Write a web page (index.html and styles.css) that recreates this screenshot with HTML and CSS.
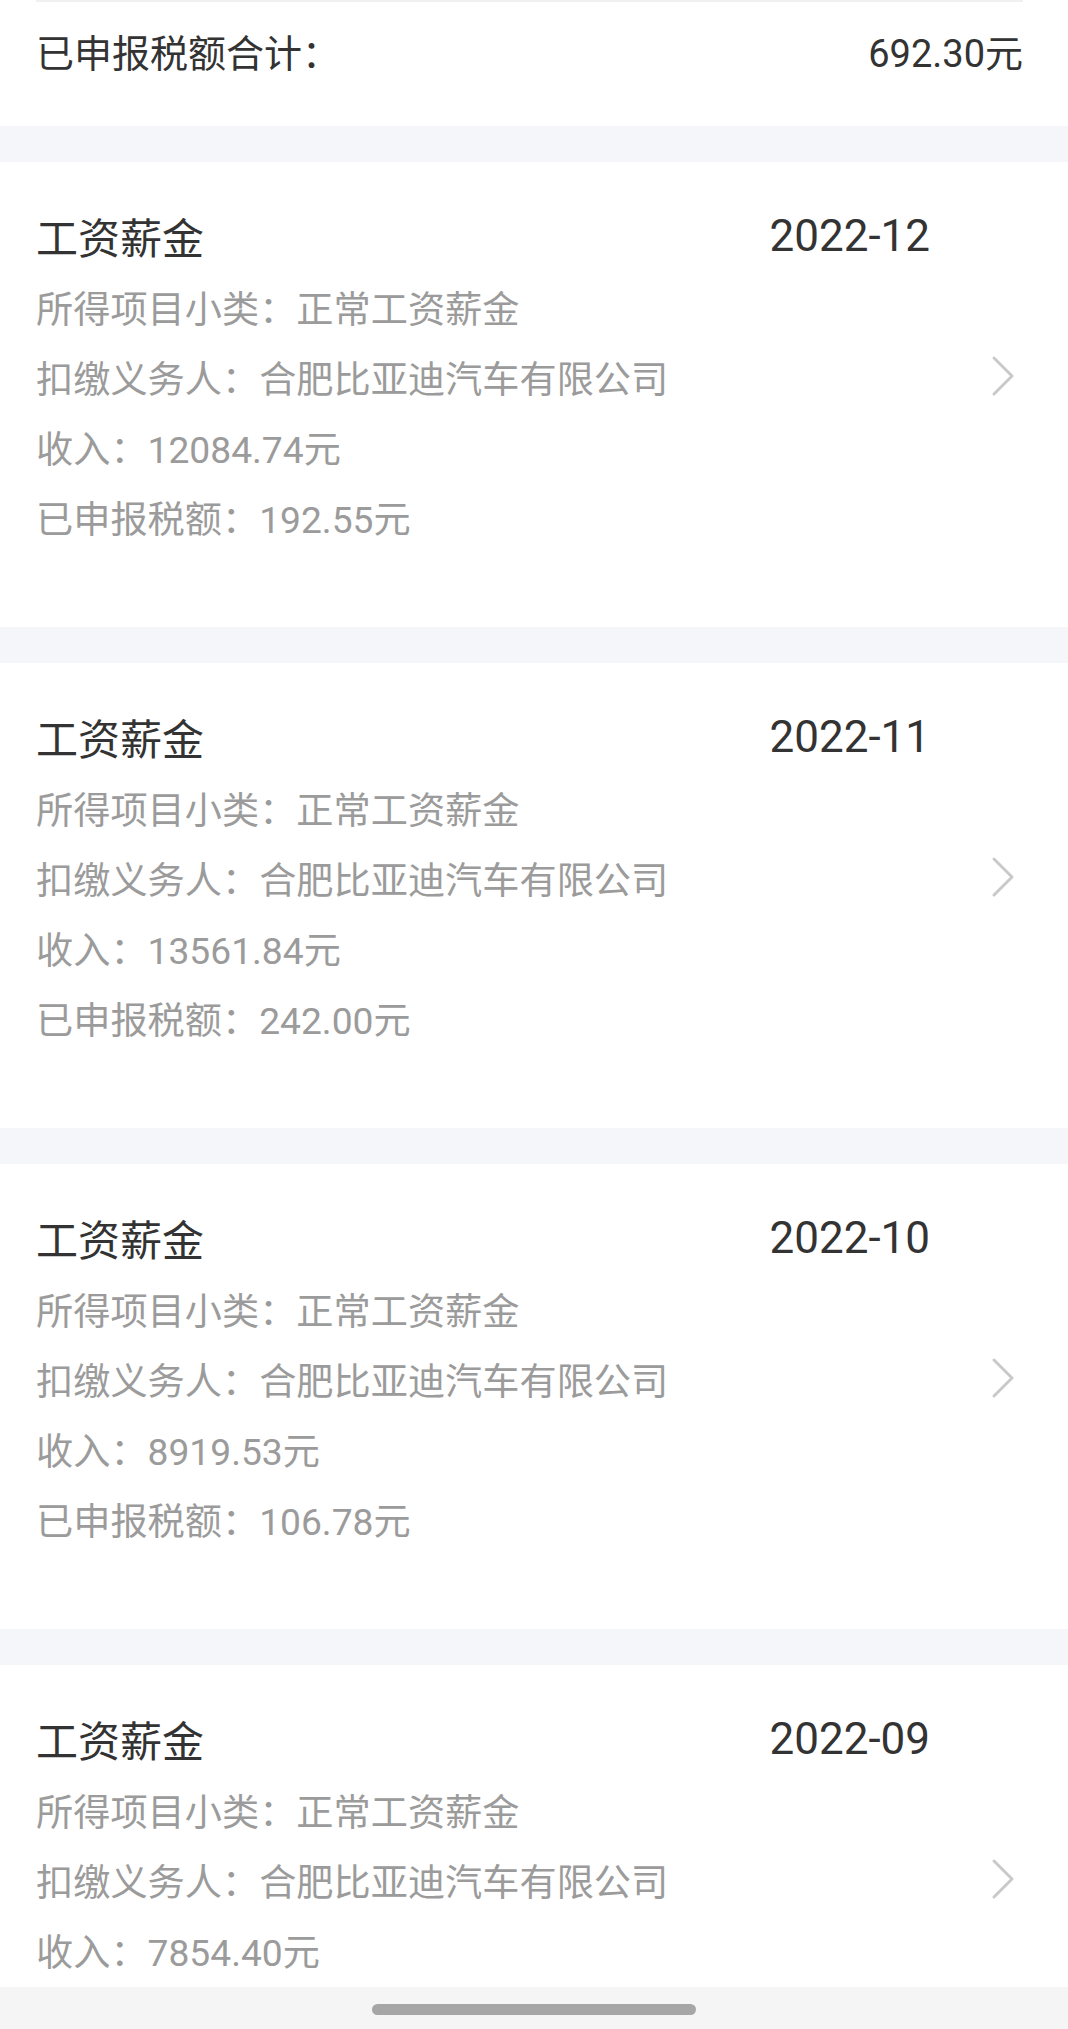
FILE: index.html
```html
<!DOCTYPE html>
<html lang="zh-CN">
<head>
<meta charset="utf-8">
<title>收入纳税明细</title>
<link rel="stylesheet" href="styles.css">
</head>
<body>
<div class="page">
  <section class="summary">
    <div class="summary-row">
      <span class="summary-label">已申报税额合计：</span>
      <span class="summary-value">692.30元</span>
    </div>
  </section>

  <section class="card">
    <div class="card-body">
      <div class="card-head"><span class="card-title">工资薪金</span><span class="card-date">2022-12</span></div>
      <div class="card-line">所得项目小类：正常工资薪金</div>
      <div class="card-line">扣缴义务人：合肥比亚迪汽车有限公司</div>
      <div class="card-line">收入：12084.74元</div>
      <div class="card-line">已申报税额：192.55元</div>
    </div>
    <svg class="chevron" viewBox="0 0 26 42"><path d="M4 3 L22 21 L4 39"/></svg>
  </section>

  <section class="card">
    <div class="card-body">
      <div class="card-head"><span class="card-title">工资薪金</span><span class="card-date">2022-11</span></div>
      <div class="card-line">所得项目小类：正常工资薪金</div>
      <div class="card-line">扣缴义务人：合肥比亚迪汽车有限公司</div>
      <div class="card-line">收入：13561.84元</div>
      <div class="card-line">已申报税额：242.00元</div>
    </div>
    <svg class="chevron" viewBox="0 0 26 42"><path d="M4 3 L22 21 L4 39"/></svg>
  </section>

  <section class="card">
    <div class="card-body">
      <div class="card-head"><span class="card-title">工资薪金</span><span class="card-date">2022-10</span></div>
      <div class="card-line">所得项目小类：正常工资薪金</div>
      <div class="card-line">扣缴义务人：合肥比亚迪汽车有限公司</div>
      <div class="card-line">收入：8919.53元</div>
      <div class="card-line">已申报税额：106.78元</div>
    </div>
    <svg class="chevron" viewBox="0 0 26 42"><path d="M4 3 L22 21 L4 39"/></svg>
  </section>

  <section class="card">
    <div class="card-body card-body-partial">
      <div class="card-head"><span class="card-title">工资薪金</span><span class="card-date">2022-09</span></div>
      <div class="card-line">所得项目小类：正常工资薪金</div>
      <div class="card-line">扣缴义务人：合肥比亚迪汽车有限公司</div>
      <div class="card-line">收入：7854.40元</div>
    </div>
    <svg class="chevron" viewBox="0 0 26 42"><path d="M4 3 L22 21 L4 39"/></svg>
  </section>
</div>
<div class="navbar"><div class="home-pill"></div></div>
</body>
</html>
```

FILE: styles.css
```css
html, body {
  margin: 0;
  padding: 0;
  background: #f5f6f9;
  overflow: hidden;
}

body {
  font-family: Roboto, "Noto Sans CJK SC", sans-serif;
  width: 1068px;
  height: 2029px;
}

.page {
  display: flex;
  flex-direction: column;
  gap: 36px;
}

.summary {
  background: #fff;
  height: 126px;
  padding: 0 45px 0 36px;
  box-sizing: border-box;
}

.summary-row {
  border-top: 2px solid #f0f0f0;
  height: 96px;
  display: flex;
  align-items: center;
  justify-content: space-between;
  font-size: 38px;
  color: #333;
}

.card {
  background: #fff;
  display: flex;
  align-items: center;
  padding: 36px 52px 74px 36px;
  box-sizing: border-box;
  height: 465px;
}

.card-body {
  flex: 1;
  display: flex;
  flex-direction: column;
}

.card-body-partial {
  padding-bottom: 70px;
}

.card-head {
  display: flex;
  justify-content: space-between;
  align-items: center;
  height: 78px;
  font-size: 42px;
  color: #333;
}

.card-date {
  font-size: 44px;
  margin-right: -1px;
}

.card-line {
  height: 70px;
  line-height: 70px;
  font-size: 37.2px;
  color: #9b9b9b;
  white-space: nowrap;
}

.chevron {
  width: 26px;
  height: 42px;
  margin-left: 61px;
  flex-shrink: 0;
}

.chevron path {
  fill: none;
  stroke: #c9c9c9;
  stroke-width: 3;
  stroke-linecap: round;
  stroke-linejoin: round;
}

.navbar {
  position: fixed;
  left: 0;
  right: 0;
  bottom: 0;
  height: 42px;
  background: #f5f5f5;
  display: flex;
  justify-content: center;
  padding-top: 17px;
  box-sizing: border-box;
}

.home-pill {
  width: 324px;
  height: 11px;
  border-radius: 6px;
  background: #a6a6a6;
}
```
